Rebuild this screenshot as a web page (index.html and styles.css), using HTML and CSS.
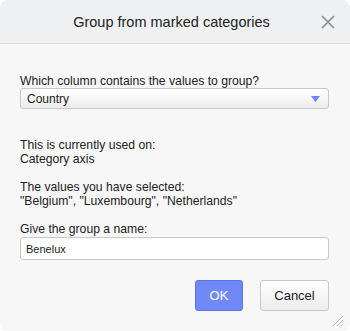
FILE: index.html
```html
<!DOCTYPE html>
<html>
<head>
<meta charset="utf-8">
<link rel="stylesheet" href="styles.css">
</head>
<body>
<div class="dialog">
  <div class="header">
    <div class="title">Group from marked categories</div>
    <svg class="close" width="14" height="14" viewBox="0 0 14 14"><path d="M1 1L13 13M13 1L1 13" stroke="#8a8a8a" stroke-width="1.6" fill="none"/></svg>
  </div>
  <div class="body">
    <div class="field">
      <div class="label">Which column contains the values to group?</div>
      <div class="select">
        <span>Country</span>
        <svg class="arrow" width="9" height="6" viewBox="0 0 9 6"><path d="M0 0H9L4.5 6Z" fill="#6f86f5"/></svg>
      </div>
    </div>
    <div class="para first">This is currently used on:<br>Category axis</div>
    <div class="para">The values you have selected:<br>"Belgium", "Luxembourg", "Netherlands"</div>
    <div class="field name">
      <div class="label">Give the group a name:</div>
      <div class="input">Benelux</div>
    </div>
    <div class="buttons">
      <div class="btn ok">OK</div>
      <div class="btn cancel">Cancel</div>
    </div>
  </div>
  <svg class="grip" width="12" height="12" viewBox="0 0 12 12"><path d="M11 1L1 11M11 5L5 11M11 9L9 11" stroke="#b8b8b8" stroke-width="1" fill="none"/></svg>
</div>
</body>
</html>
```
FILE: styles.css
```css
html, body { margin: 0; padding: 0; background: #fff; }
body { font-family: "Liberation Sans", Arial, sans-serif; color: #222; }
.dialog {
  width: 350px; height: 331px; box-sizing: border-box;
  background: #f7f7f7; border-radius: 8px; overflow: hidden;
  position: relative; display: flex; flex-direction: column;
}
.header {
  height: 43px; background: #eff0f2; border-bottom: 1px solid #dcdcdc;
  display: flex; align-items: center; justify-content: center; position: relative;
  flex-shrink: 0; padding-right: 7px;
}
.title { font-size: 14.5px; color: #222; margin-top: 1px; }
.close { position: absolute; right: 15px; top: 15px; }
.body { padding: 30px 21px 0 20px; font-size: 12.2px; line-height: 14px; }
.label { margin-bottom: 0; }
.select {
  height: 21px; box-sizing: border-box; border: 1px solid #c8c8c8; border-radius: 3px;
  background: linear-gradient(#ffffff, #ececec);
  display: flex; align-items: center; justify-content: space-between;
  padding: 0 8px 0 6px; font-size: 12px;
}
.para { margin-top: 14px; }
.para.first { margin-top: 29px; }
.field.name { margin-top: 14px; }
.input {
  margin-top: 1px; height: 23px; box-sizing: border-box; border: 1px solid #c8c8c8;
  border-radius: 3px; background: #fff; padding: 0 5px; font-size: 11px;
  display: flex; align-items: center;
}
.buttons { display: flex; justify-content: flex-end; gap: 17px; margin-top: 20px; }
.btn {
  height: 31px; box-sizing: border-box; border-radius: 3px;
  display: flex; align-items: center; justify-content: center; font-size: 13px;
}
.ok { width: 48px; background: #7088f8; border: 1px solid #5b73e6; color: #fff; }
.cancel { width: 69px; background: linear-gradient(#ffffff, #ececec); border: 1px solid #c8c8c8; color: #222; }
.grip { position: absolute; right: 6px; bottom: 4px; }
```
